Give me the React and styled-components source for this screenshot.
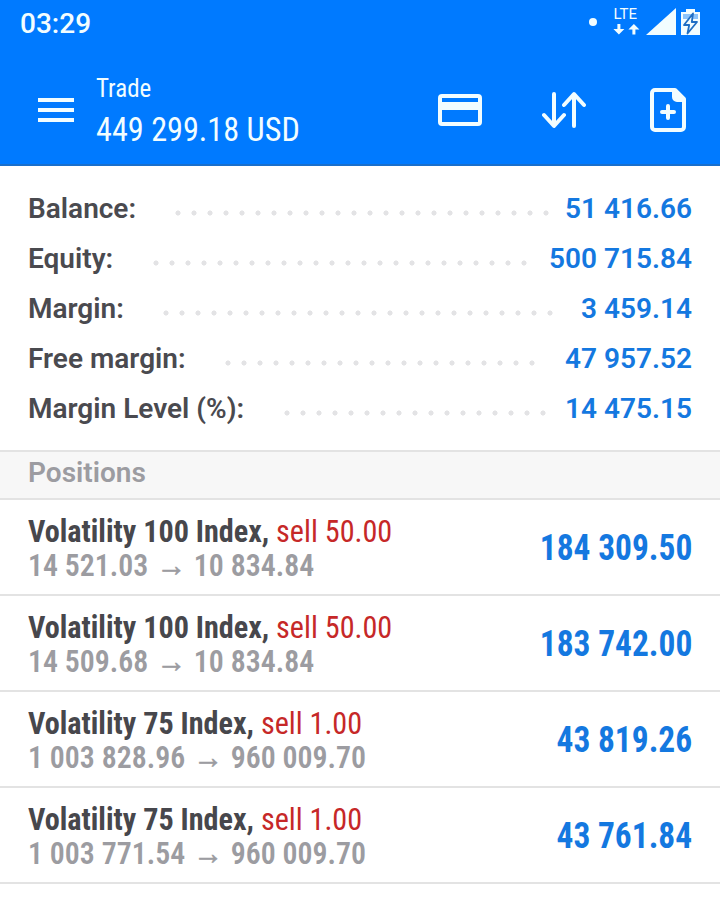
import React from "react"
import styled, { createGlobalStyle } from "styled-components"

const GlobalStyle = createGlobalStyle`
  * {
    box-sizing: border-box;
  }
  body {
    background: #fff;
    font-family: Roboto, "Liberation Sans", sans-serif;
    margin: 0;
  }
`

const Screen = styled.div`
  background: #fff;
  display: flex;
  flex-direction: column;
  height: 900px;
  overflow: hidden;
  width: 720px;
`

const Condensed = styled.span`
  font-family: "Roboto Condensed", Roboto, sans-serif;
  font-stretch: 75%;
  transform: scaleX(${props => props.$squeeze});
  transform-origin: ${props => (props.$end ? "right" : "left")} center;
  white-space: pre;
`

const Header = styled.header`
  background: #007aff;
  border-bottom: 2px solid #1a6fcb;
  color: #f2fdff;
  height: 166px;
`

const StatusBar = styled.div`
  align-items: center;
  display: flex;
  height: 46px;
  justify-content: space-between;
  padding: 0 19px 0 20px;
`

const Clock = styled.span`
  font-size: 28px;
  font-weight: 500;
  line-height: 44px;
  padding-top: 2px;
`

const Toolbar = styled.div`
  align-items: center;
  display: flex;
  height: 118px;
  padding: 10px 34px 0 38px;
`

const Title = styled.div`
  display: flex;
  flex: 1;
  flex-direction: column;
  margin-left: 22px;
  padding-top: 2px;
`

const TitleName = styled(Condensed)`
  font-size: 26px;
  line-height: 36px;
`

const TitleValue = styled(Condensed)`
  font-size: 34px;
  line-height: 46px;
`

const Actions = styled.div`
  align-items: center;
  column-gap: 60px;
  display: grid;
  grid-template-columns: 44px 44px 40px;
  justify-items: end;
`

const Summary = styled.section`
  padding: 17px 28px;
`

const SummaryRow = styled.div`
  align-items: center;
  display: flex;
  font-size: 28px;
  font-weight: 600;
  height: 50px;
`

const Label = styled.span`
  color: #4a4a4f;
`

const Leader = styled.span`
  background: radial-gradient(circle at 3px 4px, #e3e3e5 2.2px, transparent 2.9px) 0 0 / 16px 8px;
  height: 8px;
  margin: 10px auto 0 39.4px;
  width: ${props => props.$dots * 16}px;
`

const Amount = styled.span`
  color: #1478e0;
`

const SectionTitle = styled.h2`
  background: #f7f7f7;
  border-bottom: 2px solid #e3e3e3;
  border-top: 2px solid #e3e3e3;
  color: #9c9ca1;
  font-size: 28px;
  font-weight: 600;
  height: 50px;
  line-height: 42px;
  margin: 0;
  padding: 0 28px;
`

const Position = styled.div`
  align-items: center;
  border-bottom: 2px solid #e3e3e3;
  display: flex;
  height: 96px;
  justify-content: space-between;
  padding: 2px 28px 0;
`

const Details = styled.div`
  display: flex;
  flex-direction: column;
`

const Symbol = styled(Condensed)`
  color: #47474c;
  font-size: 32px;
  font-weight: 700;
  line-height: 34px;
`

const Order = styled.span`
  color: #c62828;
  font-weight: 400;
`

const Prices = styled(Condensed)`
  color: #9c9ca1;
  font-size: 32px;
  font-weight: 600;
  line-height: 34px;
`

const Arrow = styled.span`
  -webkit-text-stroke: 0.6px currentColor;
  padding: 0 1px;
`

const Profit = styled(Condensed)`
  color: #1478e0;
  font-size: 36px;
  font-weight: 700;
`

const summary = [
  { label: "Balance:", value: "51 416.66", dots: 24 },
  { label: "Equity:", value: "500 715.84", dots: 24 },
  { label: "Margin:", value: "3 459.14", dots: 25 },
  { label: "Free margin:", value: "47 957.52", dots: 20 },
  { label: "Margin Level (%):", value: "14 475.15", dots: 17 },
]

const positions = [
  { symbol: "Volatility 100 Index", order: "sell 50.00", from: "14 521.03", to: "10 834.84", profit: "184 309.50" },
  { symbol: "Volatility 100 Index", order: "sell 50.00", from: "14 509.68", to: "10 834.84", profit: "183 742.00" },
  { symbol: "Volatility 75 Index", order: "sell 1.00", from: "1 003 828.96", to: "960 009.70", profit: "43 819.26" },
  { symbol: "Volatility 75 Index", order: "sell 1.00", from: "1 003 771.54", to: "960 009.70", profit: "43 761.84" },
]

const StatusIcons = () => (
  <svg width="114" height="38" viewBox="587 4 114 38" fill="currentColor">
    <circle cx="593" cy="22" r="4" />
    <text x="613.5" y="19" fontSize="15">LTE</text>
    <path d="M617.4 24h3v5h4l-5.5 5.5-5.5-5.5h4z" />
    <path d="M632.4 34.5h3v-5h4l-5.5-5.5-5.5 5.5h4z" />
    <path d="M676 8v27h-30z" />
    <path d="M686 9h9v3h5v23h-19V12h5z" />
    <path d="M683 14h15v5h-15z" fill="#8cc4fb" />
    <path d="M693 13.5l-9 11.5h5.2l-1.7 8.5 9.5-11.5h-5.2z" fill="#f2fdff" stroke="#1f6fc4" strokeWidth="1.8" strokeLinejoin="round" />
  </svg>
)

const MenuIcon = () => (
  <svg width="36" height="26" viewBox="0 0 36 26" fill="currentColor">
    <path d="M0 1h36v4H0zM0 11h36v4H0zM0 21h36v4H0z" />
  </svg>
)

const CardIcon = () => (
  <svg width="44" height="32" viewBox="0 0 44 32" fill="none">
    <rect x="2" y="2" width="40" height="28" rx="2" stroke="currentColor" strokeWidth="4" />
    <path d="M2 8h40v8H2z" fill="currentColor" />
  </svg>
)

const SortIcon = () => (
  <svg width="44" height="38" viewBox="0 0 44 38" fill="none" stroke="currentColor" strokeWidth="4" strokeLinecap="round" strokeLinejoin="round">
    <path d="M12 3v31M2 24l10 11 10-11" />
    <path d="M32 35V4M22 14L32 3l10 11" />
  </svg>
)

const NewOrderIcon = () => (
  <svg width="36" height="44" viewBox="0 0 36 44" fill="none" stroke="currentColor" strokeWidth="4" strokeLinecap="round" strokeLinejoin="round">
    <path d="M5 2h20l9 9v28a3 3 0 0 1-3 3H5a3 3 0 0 1-3-3V5a3 3 0 0 1 3-3z" />
    <path d="M24 3v6a3 3 0 0 0 3 3h6z" fill="currentColor" />
    <path d="M18 18v12M12 24h12" />
  </svg>
)

const App = () => (
  <Screen>
    <GlobalStyle />
    <Header>
      <StatusBar>
        <Clock>03:29</Clock>
        <StatusIcons />
      </StatusBar>
      <Toolbar>
        <MenuIcon />
        <Title>
          <TitleName $squeeze={0.96}>Trade</TitleName>
          <TitleValue $squeeze={0.948}>449 299.18 USD</TitleValue>
        </Title>
        <Actions>
          <CardIcon />
          <SortIcon />
          <NewOrderIcon />
        </Actions>
      </Toolbar>
    </Header>
    <Summary>
      {summary.map(row => (
        <SummaryRow key={row.label}>
          <Label>{row.label}</Label>
          <Leader $dots={row.dots} />
          <Amount>{row.value}</Amount>
        </SummaryRow>
      ))}
    </Summary>
    <SectionTitle>Positions</SectionTitle>
    {positions.map(position => (
      <Position key={position.profit}>
        <Details>
          <Symbol $squeeze={0.942}>
            {position.symbol}, <Order>{position.order}</Order>
          </Symbol>
          <Prices $squeeze={0.932}>
            {position.from} <Arrow>→</Arrow> {position.to}
          </Prices>
        </Details>
        <Profit $squeeze={0.928} $end>{position.profit}</Profit>
      </Position>
    ))}
  </Screen>
)

export default App
